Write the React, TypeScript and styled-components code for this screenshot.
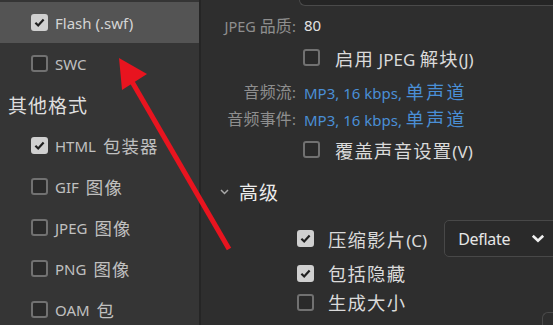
import React from 'react';
import styled, { createGlobalStyle } from 'styled-components';

const GlobalStyle = createGlobalStyle`
  html, body {
    margin: 0;
    padding: 0;
    background: #2e2e2e;
  }
  body {
    font-family: "Noto Sans", "Noto Sans CJK SC", sans-serif;
  }
`;

const Page = styled.div`
  position: relative;
  display: flex;
  width: 553px;
  height: 325px;
  overflow: hidden;
  background: #2e2e2e;
`;

// CJK runs are drawn a little larger and tracked out, like the original UI font
const Zh = styled.span`
  font-family: "Noto Sans CJK SC", sans-serif;
  font-size: var(--zh-size, 1.15em);
  letter-spacing: var(--zh-track, 1px);
`;

const mix = (text: string) =>
  text
    .split(/([\u3400-\u9fff]+)/)
    .map((part, i) => (i % 2 ? <Zh key={i}>{part}</Zh> : part));

/* ---------- checkbox ---------- */

const Box = styled.span<{ $checked?: boolean }>`
  flex-shrink: 0;
  display: inline-flex;
  align-items: center;
  justify-content: center;
  width: 17px;
  height: 17px;
  box-sizing: border-box;
  border-radius: 3px;
  border: 2px solid ${(p) => (p.$checked ? '#d0d0d0' : '#717171')};
  background: ${(p) => (p.$checked ? '#d0d0d0' : '#2a2a2a')};
`;

const Check = ({ checked }: { checked?: boolean }) => (
  <Box $checked={checked}>
    {checked && (
      <svg width="13" height="13" viewBox="0 0 12 12">
        <path d="M2.2 6.2 L4.8 8.8 L9.8 3.2" fill="none" stroke="#1f1f1f" strokeWidth="2" />
      </svg>
    )}
  </Box>
);

/* ---------- sidebar ---------- */

const Sidebar = styled.div`
  width: 199px;
  flex-shrink: 0;
  padding-top: 2px;
  background: #353535;
  border-right: 2px solid #252525;
`;

const Item = styled.div<{ $active?: boolean }>`
  display: flex;
  align-items: center;
  gap: 7px;
  height: 41px;
  padding-left: 31px;
  background: ${(p) => (p.$active ? '#545454' : 'transparent')};
  color: ${(p) => (p.$active ? '#d4d4d4' : '#c0c0c0')};
  font-size: 15px;
  --zh-size: 1.16em;
  --zh-track: 1.2px;
`;

const GroupTitle = styled.div`
  display: flex;
  align-items: center;
  height: 41px;
  padding-left: 8px;
  color: #dedede;
  font-size: 19px;
  --zh-size: 1em;
  --zh-track: 1px;
`;

/* ---------- settings pane ---------- */

const Pane = styled.div`
  flex: 1;
  display: flex;
  flex-direction: column;
  min-width: 0;
`;

const TopField = styled.div`
  height: 5px;
  margin-left: 98px;
  background: #252525;
  border-left: 1px solid #4a4a4a;
  border-bottom: 1px solid #4a4a4a;
  border-bottom-left-radius: 6px;
`;

const Row = styled.div<{ $h?: number; $mt?: number }>`
  display: flex;
  align-items: center;
  height: ${(p) => p.$h ?? 28}px;
  margin-top: ${(p) => p.$mt ?? 0}px;
  white-space: nowrap;
`;

const Field = styled(Row)`
  display: grid;
  grid-template-columns: 95px 1fr;
  column-gap: 8px;
`;

const Label = styled.span`
  justify-self: end;
  color: #8e8e8e;
  font-size: 14.5px;
  --zh-size: 1.1em;
  --zh-track: 0.3px;
`;

const Value = styled.span<{ $link?: boolean }>`
  color: ${(p) => (p.$link ? '#4a8fd6' : '#e2e2e2')};
  font-size: 15px;
  --zh-size: 1.2em;
  --zh-track: 2.4px;
`;

const Option = styled(Row)<{ $indent: number; $gap: number }>`
  gap: ${(p) => p.$gap}px;
  padding-left: ${(p) => p.$indent}px;
  color: #dadada;
  font-size: 17px;
  --zh-size: 1.08em;
  --zh-track: 1.2px;
`;

const SectionHead = styled(Row)`
  gap: 10px;
  padding-left: 19px;
  color: #ececec;
  font-size: 19px;
  --zh-size: 1em;
  --zh-track: 1px;
`;

const Select = styled.div`
  display: flex;
  align-items: center;
  justify-content: space-between;
  flex-shrink: 0;
  width: 130px;
  height: 37px;
  box-sizing: border-box;
  margin-left: 3px;
  padding: 0 28px 0 13px;
  border: 1px solid #484848;
  border-radius: 5px;
  background: #2a2a2a;
  color: #e6e6e6;
  font-size: 16px;
  letter-spacing: -0.3px;
`;

const Footer = styled.div`
  display: flex;
  justify-content: flex-end;
  margin-top: -4px;
`;

const Corner = styled.div`
  width: 10px;
  height: 12px;
  border-top: 1px solid #4a4a4a;
  border-left: 1px solid #4a4a4a;
  border-top-left-radius: 6px;
`;

/* ---------- annotation ---------- */

const Overlay = styled.svg`
  position: absolute;
  inset: 0;
  pointer-events: none;
`;

const App: React.FC = () => (
  <>
    <GlobalStyle />
    <Page>
      <Sidebar>
        <Item $active>
          <Check checked />
          Flash (.swf)
        </Item>
        <Item>
          <Check />
          SWC
        </Item>
        <GroupTitle>{mix('其他格式')}</GroupTitle>
        <Item>
          <Check checked />
          {mix('HTML 包装器')}
        </Item>
        <Item>
          <Check />
          {mix('GIF 图像')}
        </Item>
        <Item>
          <Check />
          {mix('JPEG 图像')}
        </Item>
        <Item>
          <Check />
          {mix('PNG 图像')}
        </Item>
        <Item>
          <Check />
          {mix('OAM 包')}
        </Item>
      </Sidebar>

      <Pane>
        <TopField />
        <Field $mt={5}>
          <Label>{mix('JPEG 品质:')}</Label>
          <Value>80</Value>
        </Field>
        <Option $mt={6} $indent={102} $gap={15}>
          <Check />
          <span>{mix('启用 JPEG 解块(J)')}</span>
        </Option>
        <Field $mt={6}>
          <Label>{mix('音频流:')}</Label>
          <Value $link>{mix('MP3, 16 kbps, 单声道')}</Value>
        </Field>
        <Field $h={26}>
          <Label>{mix('音频事件:')}</Label>
          <Value $link>{mix('MP3, 16 kbps, 单声道')}</Value>
        </Field>
        <Option $mt={5} $indent={102} $gap={15}>
          <Check />
          <span>{mix('覆盖声音设置(V)')}</span>
        </Option>

        <SectionHead $mt={15}>
          <svg width="9" height="6" viewBox="0 0 9 6">
            <path d="M1 1 L4.5 4.5 L8 1" fill="none" stroke="#a8a8a8" strokeWidth="1.5" />
          </svg>
          <span>{mix('高级')}</span>
        </SectionHead>
        <Option $mt={14} $h={38} $indent={96} $gap={14}>
          <Check checked />
          <span>{mix('压缩影片(C)')}</span>
          <Select>
            Deflate
            <svg width="14" height="9" viewBox="0 0 14 9">
              <path d="M1.8 1.8 L7 6.8 L12.2 1.8" fill="none" stroke="#f0f0f0" strokeWidth="2.6" />
            </svg>
          </Select>
        </Option>
        <Option $mt={2} $indent={96} $gap={14}>
          <Check checked />
          <span>{mix('包括隐藏')}</span>
        </Option>
        <Option $mt={2} $indent={96} $gap={14}>
          <Check />
          <span>{mix('生成大小')}</span>
        </Option>
        <Footer>
          <Corner />
        </Footer>
      </Pane>

      <Overlay width="553" height="325" viewBox="0 0 553 325">
        <line x1="229" y1="249" x2="131" y2="80" stroke="#e8141f" strokeWidth="5" />
        <polygon points="119,58 147,74 122,90" fill="#e8141f" />
      </Overlay>
    </Page>
  </>
);

export default App;
